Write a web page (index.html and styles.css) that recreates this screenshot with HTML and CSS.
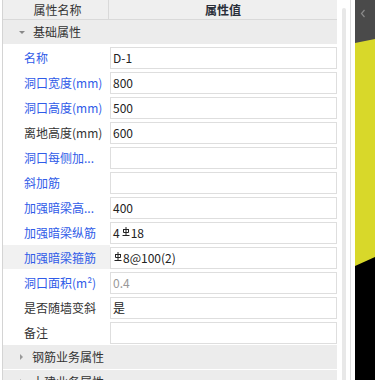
FILE: index.html
```html
<!DOCTYPE html>
<html>
<head>
<meta charset="utf-8">
<link rel="stylesheet" href="styles.css">
</head>
<body>
<div class="app">
  <div class="grid">
    <div class="head">
      <div class="hcell hname">属性名称</div>
      <div class="hcell hval">属性值</div>
    </div>
    <div class="group"><span class="tri down"></span>基础属性</div>
    <div class="row"><div class="lab blue">名称</div><div class="val">D-1</div></div>
    <div class="row"><div class="lab blue">洞口宽度(mm)</div><div class="val">800</div></div>
    <div class="row"><div class="lab blue">洞口高度(mm)</div><div class="val">500</div></div>
    <div class="row"><div class="lab">离地高度(mm)</div><div class="val">600</div></div>
    <div class="row"><div class="lab blue">洞口每侧加...</div><div class="val"></div></div>
    <div class="row"><div class="lab blue">斜加筋</div><div class="val"></div></div>
    <div class="row"><div class="lab blue">加强暗梁高...</div><div class="val">400</div></div>
    <div class="row"><div class="lab blue">加强暗梁纵筋</div><div class="val">4<svg class="rb" viewBox="0 0 8 9" width="8" height="9"><path d="M4 0V8.5M1 2.5H7M1.5 2.5V5.5H6.5V2.5M0.5 8.5H7.5" fill="none" stroke="#222" stroke-width="1"/></svg>18</div></div>
    <div class="row sel"><div class="lab blue">加强暗梁箍筋</div><div class="val"><svg class="rb first" viewBox="0 0 8 9" width="8" height="9"><path d="M4 0V8.5M1 2.5H7M1.5 2.5V5.5H6.5V2.5M0.5 8.5H7.5" fill="none" stroke="#222" stroke-width="1"/></svg>8@100(2)</div></div>
    <div class="row"><div class="lab blue">洞口面积(m²)</div><div class="val dis">0.4</div></div>
    <div class="row"><div class="lab">是否随墙变斜</div><div class="val">是</div></div>
    <div class="row"><div class="lab">备注</div><div class="val"></div></div>
    <div class="group g2"><span class="tri right"></span>钢筋业务属性</div>
    <div class="group g3"><span class="tri right"></span>土建业务属性</div>
  </div>
  <div class="track"></div>
  <div class="vline"></div>
  <div class="side">
    <div class="side-top">
      <svg class="chev" width="20" height="43" viewBox="0 0 20 43"><polygon points="0,0 20,0 20,39 0,43" fill="#4a4a4a"/><path d="M9.5 10 L6.5 13.5 L9.5 17" fill="none" stroke="#8a8a8a" stroke-width="1.2"/></svg>
    </div>
    <div class="side-yel"></div>
    <div class="side-bot">
      <svg width="20" height="12" viewBox="0 0 20 12"><polygon points="0,9 20,0 20,12 0,12" fill="#000"/></svg>
    </div>
    <div class="side-blk"></div>
  </div>
</div>
</body>
</html>
```
FILE: styles.css
```css
html, body {
  margin: 0;
  padding: 0;
  background: #fff;
}
body {
  width: 375px;
  height: 380px;
  overflow: hidden;
  font-family: "Noto Sans CJK SC", "Microsoft YaHei", sans-serif;
  font-size: 12px;
  color: #222;
}
.app {
  display: flex;
  height: 380px;
  padding-left: 2px;
}
.grid {
  width: 334px;
  border-left: 1px solid #d4d4d4;
  display: flex;
  flex-direction: column;
  flex: none;
}
.head {
  display: flex;
  height: 19px;
  background: #efefef;
  border-bottom: 1px solid #d9d9d9;
  color: #333;
  line-height: 19px;
  flex: none;
}
.hcell {
  text-align: center;
}
.hname {
  width: 106px;
  border-right: 1px solid #d9d9d9;
  padding-left: 4px;
  box-sizing: border-box;
}
.hval {
  flex: 1;
  font-weight: bold;
  color: #2a2f3a;
}
.group {
  height: 24px;
  line-height: 24px;
  background: #ececec;
  color: #333;
  padding-left: 15px;
  display: flex;
  align-items: center;
  flex: none;
}
.g2 { margin-top: 1px; }
.g3 { margin-top: 1px; }
.tri {
  width: 0;
  height: 0;
}
.tri.down {
  border-left: 3px solid transparent;
  border-right: 3px solid transparent;
  border-top: 3px solid #888;
  margin-left: 1px;
  margin-right: 8px;
}
.tri.right {
  border-top: 3px solid transparent;
  border-bottom: 3px solid transparent;
  border-left: 3px solid #999;
  margin-left: 2px;
  margin-right: 9px;
}
.row {
  display: flex;
  height: 25px;
  flex: none;
}
.lab {
  width: 86px;
  padding-left: 21px;
  margin-top: 3px;
  height: 22px;
  line-height: 22px;
  color: #333;
  white-space: nowrap;
}
.lab.blue {
  color: #2f5be8;
}
.sel .lab {
  background: #f1f1f1;
  margin-top: 1px;
  height: 24px;
  line-height: 26px;
}
.val {
  margin-top: 3px;
  width: 223px;
  height: 20px;
  border: 1px solid #dedede;
  padding-left: 2px;
  line-height: 20px;
  color: #222;
  display: flex;
  align-items: center;
}
.val.dis {
  color: #999;
}
.rb {
  margin: -3px 1px 0 2px;
}
.rb.first {
  margin-left: 1px;
}
.track {
  width: 4px;
  margin-left: 5px;
  margin-top: 8px;
  background: #e8e8e8;
  border-radius: 2px 2px 0 0;
  flex: none;
}
.vline {
  width: 1px;
  margin-left: 4px;
  background: #dedede;
  flex: none;
}
.side {
  width: 20px;
  margin-left: 4px;
  flex: none;
  display: flex;
  flex-direction: column;
  background: #d8d82a;
}
.side svg {
  display: block;
}
.side-top {
  height: 43px;
  flex: none;
}
.side-yel {
  height: 214px;
  flex: none;
}
.side-bot {
  height: 12px;
  flex: none;
}
.side-blk {
  flex: 1;
  background: #000;
}
```
